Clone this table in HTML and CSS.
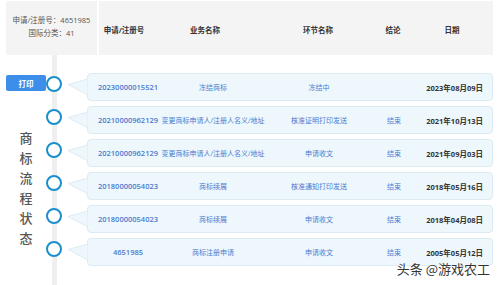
FILE: index.html
```html
<!DOCTYPE html>
<html lang="zh-CN">
<head>
    <meta charset="UTF-8">
    <meta name="viewport" content="width=device-width, initial-scale=1.0">
    <link rel="stylesheet" href="styles.css">
</head>
<body>
    <div class="page">
        <div class="header">
            <div class="info">
                <p>申请/注册号：4651985</p>
                <p>国际分类：41</p>
            </div>
            <div class="head-cols">
                <span>申请/注册号</span>
                <span>业务名称</span>
                <span>环节名称</span>
                <span>结论</span>
                <span>日期</span>
            </div>
        </div>

        <div class="timeline">
            <div class="side">
                <button class="print-btn">打印</button>
                <div class="side-label">商<br>标<br>流<br>程<br>状<br>态</div>
            </div>
            <div class="rows">
                <div class="row">
                    <div class="dot"></div>
                    <svg class="tail" width="20" height="16" viewBox="0 0 20 16"><polygon points="0,5.5 20,0 20,16" fill="#eef7fc" stroke="#dcebf3" stroke-width="1"/></svg>
                    <div class="card">
                        <span class="cell num">20230000015521</span>
                        <span class="cell">冻结商标</span>
                        <span class="cell">冻结中</span>
                        <span class="cell"></span>
                        <span class="cell date">2023年08月09日</span>
                    </div>
                </div>
                <div class="row">
                    <div class="dot"></div>
                    <svg class="tail" width="20" height="16" viewBox="0 0 20 16"><polygon points="0,5.5 20,0 20,16" fill="#eef7fc" stroke="#dcebf3" stroke-width="1"/></svg>
                    <div class="card">
                        <span class="cell num">20210000962129</span>
                        <span class="cell">变更商标申请人/注册人名义/地址</span>
                        <span class="cell">核准证明打印发送</span>
                        <span class="cell">结束</span>
                        <span class="cell date">2021年10月13日</span>
                    </div>
                </div>
                <div class="row">
                    <div class="dot"></div>
                    <svg class="tail" width="20" height="16" viewBox="0 0 20 16"><polygon points="0,5.5 20,0 20,16" fill="#eef7fc" stroke="#dcebf3" stroke-width="1"/></svg>
                    <div class="card">
                        <span class="cell num">20210000962129</span>
                        <span class="cell">变更商标申请人/注册人名义/地址</span>
                        <span class="cell">申请收文</span>
                        <span class="cell">结束</span>
                        <span class="cell date">2021年09月03日</span>
                    </div>
                </div>
                <div class="row">
                    <div class="dot"></div>
                    <svg class="tail" width="20" height="16" viewBox="0 0 20 16"><polygon points="0,5.5 20,0 20,16" fill="#eef7fc" stroke="#dcebf3" stroke-width="1"/></svg>
                    <div class="card">
                        <span class="cell num">20180000054023</span>
                        <span class="cell">商标续展</span>
                        <span class="cell">核准通知打印发送</span>
                        <span class="cell">结束</span>
                        <span class="cell date">2018年05月16日</span>
                    </div>
                </div>
                <div class="row">
                    <div class="dot"></div>
                    <svg class="tail" width="20" height="16" viewBox="0 0 20 16"><polygon points="0,5.5 20,0 20,16" fill="#eef7fc" stroke="#dcebf3" stroke-width="1"/></svg>
                    <div class="card">
                        <span class="cell num">20180000054023</span>
                        <span class="cell">商标续展</span>
                        <span class="cell">申请收文</span>
                        <span class="cell">结束</span>
                        <span class="cell date">2018年04月08日</span>
                    </div>
                </div>
                <div class="row">
                    <div class="dot"></div>
                    <svg class="tail" width="20" height="16" viewBox="0 0 20 16"><polygon points="0,5.5 20,0 20,16" fill="#eef7fc" stroke="#dcebf3" stroke-width="1"/></svg>
                    <div class="card">
                        <span class="cell num">4651985</span>
                        <span class="cell">商标注册申请</span>
                        <span class="cell">申请收文</span>
                        <span class="cell">结束</span>
                        <span class="cell date">2005年05月12日</span>
                    </div>
                </div>
            </div>
        </div>

        <div class="watermark">头条 @游戏农工</div>
    </div>
</body>
</html>
```

FILE: styles.css
```css
body {
    margin: 0;
    padding: 0;
    background-color: #FFFFFF;
    font-family: 'Open Sans', 'Noto Sans CJK SC', sans-serif;
    color: #333;
}
.page {
    position: relative;
    width: 500px;
    height: 285px;
    overflow: hidden;
}
.header {
    display: flex;
    gap: 2px;
    height: 54px;
    margin: 1px 7px 0 6px;
}
.info {
    width: 91px;
    background-color: #f4f4f4;
    display: flex;
    flex-direction: column;
    justify-content: center;
    align-items: center;
    font-size: 7.5px;
    color: #555;
    line-height: 13px;
    padding-bottom: 2px;
    box-sizing: border-box;
}
.info p {
    margin: 0;
}
.head-cols {
    flex: 1;
    background-color: #f4f4f4;
    display: grid;
    grid-template-columns: 50px 112px 114px 36px 1fr;
    align-items: center;
    font-size: 7.5px;
    font-weight: 700;
    color: #333;
    padding-top: 3px;
}
.head-cols span {
    display: flex;
    justify-content: center;
}
.timeline {
    display: flex;
    margin-top: 18px;
}
.side {
    width: 46px;
    padding-left: 6px;
    box-sizing: border-box;
    display: flex;
    flex-direction: column;
    align-items: center;
}
.print-btn {
    width: 40px;
    height: 16px;
    margin-top: 2px;
    padding: 0;
    border: none;
    border-radius: 2px;
    background-color: #3d8ee8;
    color: #FFFFFF;
    font-family: 'Noto Sans CJK SC', sans-serif;
    font-size: 7.5px;
    font-weight: 700;
}
.side-label {
    margin-top: 37px;
    font-family: 'Noto Sans CJK SC', sans-serif;
    font-size: 13px;
    line-height: 20px;
    font-weight: 500;
    color: #555;
    text-align: center;
}
.rows {
    flex: 1;
    position: relative;
    display: flex;
    flex-direction: column;
    gap: 5px;
    margin-right: 7px;
}
.rows::before {
    content: "";
    position: absolute;
    top: -18px;
    bottom: -40px;
    left: 6px;
    width: 5px;
    background-color: #efefef;
}
.row {
    display: flex;
    align-items: flex-start;
    height: 28px;
}
.dot {
    position: relative;
    width: 16px;
    height: 16px;
    margin-top: 3px;
    box-sizing: border-box;
    border: 2.5px solid #1a8fcb;
    border-radius: 50%;
    background-color: #FFFFFF;
}
.tail {
    position: relative;
    z-index: 1;
    margin: 6px -1px 0 6px;
}
.card {
    flex: 1;
    height: 28px;
    box-sizing: border-box;
    display: grid;
    grid-template-columns: 80px 90px 122px 28px 1fr;
    align-items: center;
    background-color: #eef7fc;
    border: 1px solid #dcebf3;
    border-radius: 4px;
    font-size: 7px;
    color: #4a7bd0;
}
.cell {
    display: flex;
    justify-content: center;
    white-space: nowrap;
}
.cell.num {
    font-size: 7.5px;
    font-weight: 600;
}
.cell.date {
    justify-content: flex-end;
    padding-right: 9px;
    font-size: 7.5px;
    color: #333;
    font-weight: 700;
}
.watermark {
    position: absolute;
    right: 10px;
    bottom: 7px;
    font-family: 'Noto Sans CJK SC', sans-serif;
    font-size: 13px;
    color: #333;
    text-shadow: 0 0 2px #FFFFFF, 0 0 2px #FFFFFF;
}
```
